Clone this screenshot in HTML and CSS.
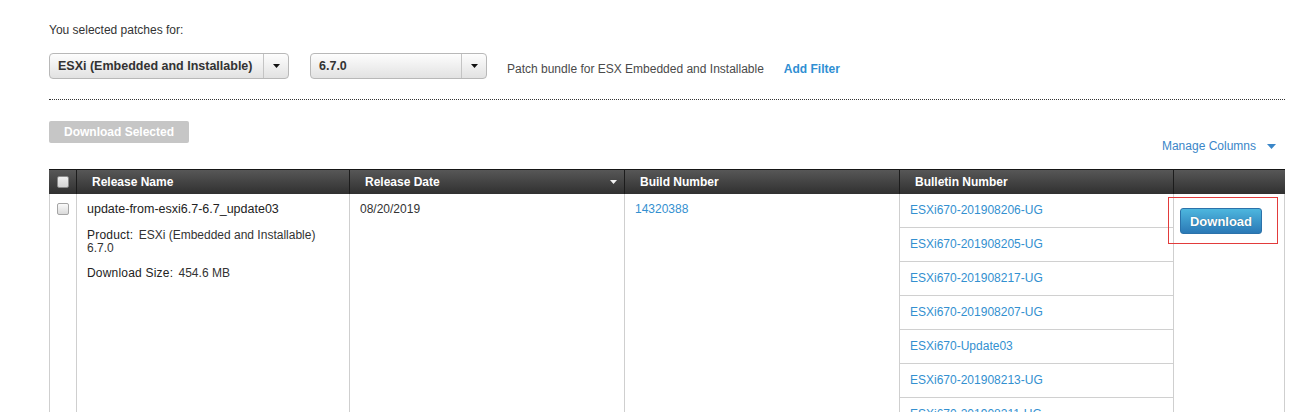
FILE: index.html
```html
<!DOCTYPE html>
<html lang="en">
<head>
<meta charset="utf-8">
<title>Patches</title>
<link rel="stylesheet" href="styles.css">
</head>
<body>
<div class="page">
  <p class="intro">You selected patches for:</p>
  <div class="filters">
    <div class="select select-product">
      <span class="select-label">ESXi (Embedded and Installable)</span>
      <span class="select-arrow"><svg width="7" height="4" viewBox="0 0 7 4"><path d="M0 0H7L3.5 4Z" fill="#111"/></svg></span>
    </div>
    <div class="select select-version">
      <span class="select-label">6.7.0</span>
      <span class="select-arrow"><svg width="7" height="4" viewBox="0 0 7 4"><path d="M0 0H7L3.5 4Z" fill="#111"/></svg></span>
    </div>
    <span class="filter-note">Patch bundle for ESX Embedded and Installable</span>
    <a class="add-filter" href="#">Add Filter</a>
  </div>
  <div class="divider"></div>
  <div class="toolbar">
    <button class="btn-disabled" type="button">Download Selected</button>
    <a class="manage" href="#">Manage Columns<svg width="9" height="5" viewBox="0 0 9 5"><path d="M0 0H9L4.5 5Z" fill="#3a86c8"/></svg></a>
  </div>
  <div class="grid">
    <div class="th th-check"><span class="checkbox checkbox-head"></span></div>
    <div class="th">Release Name</div>
    <div class="th th-sort"><span>Release Date</span><svg width="7" height="4" viewBox="0 0 7 4"><path d="M0 0H7L3.5 4Z" fill="#f2f2f2"/></svg></div>
    <div class="th">Build Number</div>
    <div class="th">Bulletin Number</div>
    <div class="th th-last"></div>

    <div class="td td-check"><span class="checkbox"></span></div>
    <div class="td td-name">
      <div class="release-name">update-from-esxi6.7-6.7_update03</div>
      <div class="meta meta-product"><span class="label">Product:</span> ESXi (Embedded and Installable) 6.7.0</div>
      <div class="meta"><span class="label">Download Size:</span> 454.6 MB</div>
    </div>
    <div class="td td-text">08/20/2019</div>
    <div class="td td-text"><a class="link" href="#">14320388</a></div>
    <div class="td td-bulletins">
      <a class="bulletin" href="#">ESXi670-201908206-UG</a>
      <a class="bulletin" href="#">ESXi670-201908205-UG</a>
      <a class="bulletin" href="#">ESXi670-201908217-UG</a>
      <a class="bulletin" href="#">ESXi670-201908207-UG</a>
      <a class="bulletin" href="#">ESXi670-Update03</a>
      <a class="bulletin" href="#">ESXi670-201908213-UG</a>
      <a class="bulletin" href="#">ESXi670-201908211-UG</a>
    </div>
    <div class="td td-action">
      <button class="btn-download" type="button">Download</button>
      <span class="highlight-box"></span>
    </div>
  </div>
</div>
</body>
</html>
```
FILE: styles.css
```css
html, body {
  margin: 0;
  padding: 0;
  overflow: hidden;
  background: #fff;
}
body {
  font-family: "Liberation Sans", Arial, sans-serif;
  font-size: 12px;
  color: #333;
}
.page {
  padding: 23px 27px 0 49px;
  width: 1236px;
}
.intro {
  margin: 0;
  line-height: 14px;
  color: #333;
}
.filters {
  display: flex;
  align-items: flex-start;
  margin-top: 16px;
  height: 26px;
}
.select {
  display: flex;
  box-sizing: border-box;
  height: 26px;
  border: 1px solid #b8b8b8;
  border-radius: 4px;
  background: linear-gradient(#fdfdfd, #e2e2e2);
}
.select-product { width: 240px; }
.select-version { width: 177px; margin-left: 21px; }
.select-label {
  flex: 1;
  padding-left: 8px;
  font-weight: bold;
  font-size: 12.5px;
  line-height: 24px;
  color: #333;
}
.select-arrow {
  width: 24px;
  border-left: 1px solid #c4c4c4;
  display: flex;
  align-items: center;
  justify-content: center;
}
.filter-note {
  margin-left: 20px;
  margin-top: 9px;
  line-height: 14px;
  color: #4a4a4a;
}
.add-filter {
  margin-left: 20px;
  margin-top: 9px;
  line-height: 14px;
  font-weight: bold;
  color: #2f8fd3;
  text-decoration: none;
}
.divider {
  margin-top: 20px;
  border-top: 1px dotted #333;
}
.toolbar {
  display: flex;
  justify-content: space-between;
  align-items: flex-start;
  margin-top: 21px;
}
.btn-disabled {
  width: 140px;
  height: 22px;
  border: 0;
  border-radius: 2px;
  background: #c6c6c6;
  color: #fff;
  font-family: inherit;
  font-size: 12px;
  font-weight: bold;
  padding: 0;
}
.manage {
  display: flex;
  align-items: center;
  gap: 11px;
  margin-top: 18px;
  margin-right: 9px;
  line-height: 14px;
  color: #3a86c8;
  text-decoration: none;
}
.grid {
  display: grid;
  grid-template-columns: 27px 273px 275px 275px 274px 112px;
  margin-top: 16px;
}
.th {
  box-sizing: border-box;
  height: 25px;
  border-top: 1px solid #161616;
  border-left: 1px solid #1c1c1c;
  background: linear-gradient(#575757, #303030);
  color: #fff;
  font-weight: bold;
  line-height: 24px;
  padding-left: 15px;
}
.th-check {
  border-left: 0;
  padding: 0;
  display: flex;
  align-items: center;
  justify-content: center;
}
.th-sort {
  display: flex;
  justify-content: space-between;
  align-items: center;
  padding-right: 7px;
}
.checkbox {
  display: block;
  box-sizing: border-box;
  width: 12px;
  height: 12px;
  border: 1px solid #a5a5a5;
  border-radius: 2px;
  background: linear-gradient(#fafafa, #dadada);
}
.checkbox-head {
  background: linear-gradient(#eeeeee, #d4d4d4);
  border-color: #8a8a8a;
}
.td {
  box-sizing: border-box;
  border-left: 1px solid #cfcfcf;
  min-height: 240px;
}
.td-action {
  border-right: 1px solid #cfcfcf;
  position: relative;
  padding: 14px 0 0 6px;
}
.td-check {
  display: flex;
  justify-content: center;
  padding-top: 9px;
}
.td-name {
  padding: 8px 10px 0 10px;
  color: #333;
}
.release-name {
  font-size: 12.5px;
  color: #222;
  line-height: 15px;
}
.meta {
  margin-top: 12px;
  line-height: 13px;
}
.meta-product {
  margin-top: 12px;
}
.label {
  color: #222;
  letter-spacing: 0.2px;
  margin-right: 2px;
}
.td-text {
  padding: 8px 10px 0 10px;
  line-height: 15px;
}
.link {
  color: #3390d0;
  text-decoration: none;
}
.td-bulletins {
  display: flex;
  flex-direction: column;
}
.bulletin {
  box-sizing: border-box;
  height: 34px;
  line-height: 33px;
  padding-left: 10px;
  border-bottom: 1px solid #d0d0d0;
  color: #3390d0;
  text-decoration: none;
}
.btn-download {
  width: 82px;
  height: 26px;
  padding: 0;
  border: 1px solid #2b72aa;
  border-radius: 3px;
  background: linear-gradient(#4db6de, #2b79b6);
  color: #fff;
  font-family: inherit;
  font-size: 13px;
  font-weight: bold;
  text-shadow: 0 0 1px rgba(0, 0, 0, 0.35);
}
.highlight-box {
  position: absolute;
  left: -6px;
  top: 3px;
  width: 110px;
  height: 47px;
  box-sizing: border-box;
  border: 1px solid #e23b3b;
}
```
